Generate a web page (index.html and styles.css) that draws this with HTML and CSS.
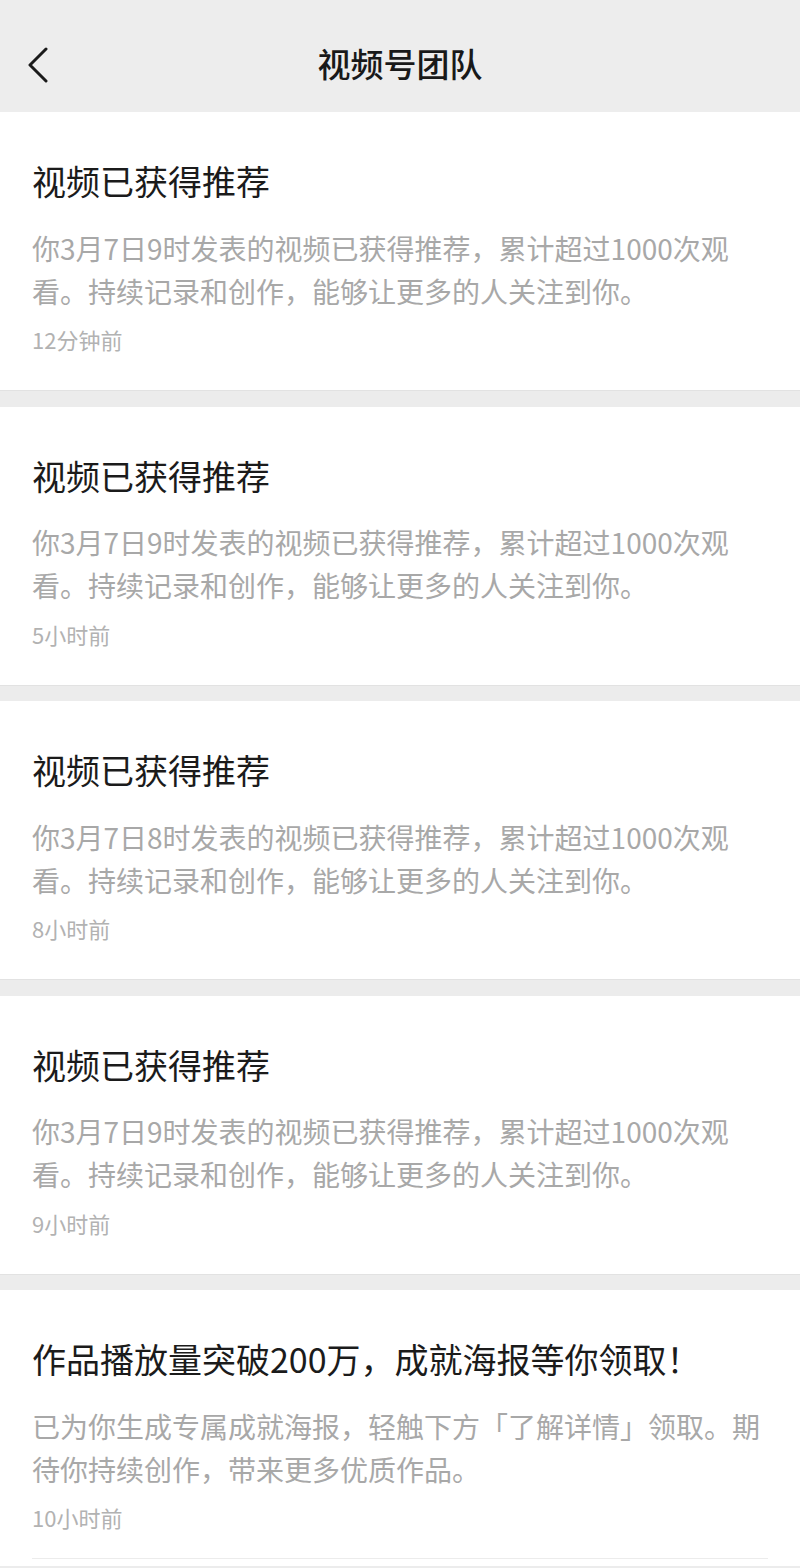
FILE: index.html
```html
<!DOCTYPE html>
<html lang="zh-CN">
<head>
<meta charset="utf-8">
<title>视频号团队</title>
<link rel="stylesheet" href="styles.css">
</head>
<body>
<header class="nav">
  <button class="back" aria-label="返回">
    <svg width="24" height="36" viewBox="0 0 24 36"><path d="M19 2 L3 18 L19 34" fill="none" stroke="#1a1a1a" stroke-width="3" stroke-linecap="round" stroke-linejoin="round"/></svg>
  </button>
  <h1 class="nav-title">视频号团队</h1>
</header>
<main class="list">
  <section class="card">
    <h2 class="card-title">视频已获得推荐</h2>
    <p class="card-body">你3月7日9时发表的视频已获得推荐，累计超过1000次观<br>看。持续记录和创作，能够让更多的人关注到你。</p>
    <div class="card-time">12分钟前</div>
  </section>
  <section class="card">
    <h2 class="card-title">视频已获得推荐</h2>
    <p class="card-body">你3月7日9时发表的视频已获得推荐，累计超过1000次观<br>看。持续记录和创作，能够让更多的人关注到你。</p>
    <div class="card-time">5小时前</div>
  </section>
  <section class="card">
    <h2 class="card-title">视频已获得推荐</h2>
    <p class="card-body">你3月7日8时发表的视频已获得推荐，累计超过1000次观<br>看。持续记录和创作，能够让更多的人关注到你。</p>
    <div class="card-time">8小时前</div>
  </section>
  <section class="card">
    <h2 class="card-title">视频已获得推荐</h2>
    <p class="card-body">你3月7日9时发表的视频已获得推荐，累计超过1000次观<br>看。持续记录和创作，能够让更多的人关注到你。</p>
    <div class="card-time">9小时前</div>
  </section>
  <section class="card card-last">
    <h2 class="card-title">作品播放量突破200万，成就海报等你领取！</h2>
    <p class="card-body">已为你生成专属成就海报，轻触下方「了解详情」领取。期<br>待你持续创作，带来更多优质作品。</p>
    <div class="card-time">10小时前</div>
    <div class="divider"></div>
  </section>
</main>
</body>
</html>
```

FILE: styles.css
```css
html, body {
  margin: 0;
  padding: 0;
}
body {
  width: 800px;
  height: 1568px;
  background: #ececec;
  font-family: "Noto Sans CJK SC", "Noto Sans", sans-serif;
  overflow: hidden;
}
.nav {
  height: 112px;
  box-sizing: border-box;
  padding-top: 14px;
  background: #ededed;
  display: flex;
  align-items: center;
  justify-content: center;
  position: relative;
}
.back {
  position: absolute;
  left: 27px;
  top: 47px;
  padding: 0;
  border: 0;
  background: none;
  width: 24px;
  height: 36px;
  display: flex;
}
.nav-title {
  margin: 0;
  font-size: 33px;
  font-weight: 500;
  line-height: 48px;
  color: #191919;
}
.list {
  display: flex;
  flex-direction: column;
  gap: 15.5px;
}
.card {
  background: #fff;
  padding: 45px 32px 36px;
  border-bottom: 1px solid #e2e2e2;
  display: flex;
  flex-direction: column;
}
.card-title {
  margin: 0;
  font-size: 34px;
  font-weight: 400;
  line-height: 48px;
  color: #1b1b1b;
  white-space: nowrap;
}
.card-body {
  margin: 21.5px 0 0;
  font-size: 28px;
  line-height: 43px;
  color: #a8a8a8;
  white-space: nowrap;
}
.card-time {
  margin-top: 11.5px;
  font-size: 22px;
  line-height: 30px;
  color: #b2b2b2;
}
.card-last {
  border-bottom: 0;
  padding-bottom: 7px;
}
.divider {
  margin-top: 26px;
  height: 1px;
  background: #ececec;
}
```
